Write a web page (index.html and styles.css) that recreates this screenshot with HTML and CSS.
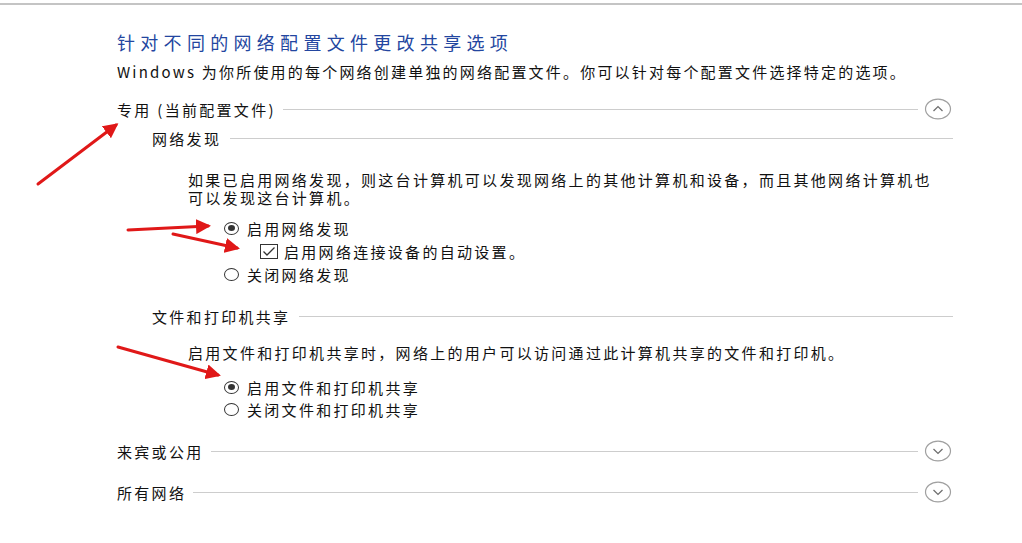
FILE: index.html
```html
<!DOCTYPE html>
<html lang="zh-CN">
<head>
    <meta charset="UTF-8">
    <title>高级共享设置</title>
    <link rel="stylesheet" href="styles.css">
</head>
<body>
    <div class="top-rule"></div>

    <main class="page">
        <h1 class="title">针对不同的网络配置文件更改共享选项</h1>
        <p class="intro">Windows 为你所使用的每个网络创建单独的网络配置文件。你可以针对每个配置文件选择特定的选项。</p>

        <section class="profile">
            <div class="profile-head">
                <span class="label">专用 (当前配置文件)</span>
                <span class="rule"></span>
                <svg class="toggle" width="28" height="22" viewBox="0 0 28 22">
                    <ellipse cx="14" cy="11" rx="12.5" ry="9.8" fill="none" stroke="#a0a0a0" stroke-width="1.2"/>
                    <path d="M9.5 13 L14 8.6 L18.5 13" fill="none" stroke="#6f6f6f" stroke-width="1.3"/>
                </svg>
            </div>

            <div class="group">
                <div class="group-head">
                    <span class="label">网络发现</span>
                    <span class="rule"></span>
                </div>
                <p class="desc">如果已启用网络发现，则这台计算机可以发现网络上的其他计算机和设备，而且其他网络计算机也可以发现这台计算机。</p>
                <div class="options">
                    <label class="option"><span class="radio checked"></span>启用网络发现</label>
                    <label class="option sub">
                        <svg class="check" width="18" height="15" viewBox="0 0 18 15">
                            <rect x="0.5" y="0.5" width="17" height="14" fill="#fff" stroke="#333" stroke-width="1"/>
                            <path d="M3.5 7.5 L7 11 L14.5 3.5" fill="none" stroke="#333" stroke-width="1.3"/>
                        </svg>启用网络连接设备的自动设置。</label>
                    <label class="option"><span class="radio"></span>关闭网络发现</label>
                </div>
            </div>

            <div class="group">
                <div class="group-head">
                    <span class="label">文件和打印机共享</span>
                    <span class="rule"></span>
                </div>
                <p class="desc">启用文件和打印机共享时，网络上的用户可以访问通过此计算机共享的文件和打印机。</p>
                <div class="options">
                    <label class="option"><span class="radio checked"></span>启用文件和打印机共享</label>
                    <label class="option"><span class="radio"></span>关闭文件和打印机共享</label>
                </div>
            </div>
        </section>

        <section class="profile closed">
            <div class="profile-head">
                <span class="label">来宾或公用</span>
                <span class="rule"></span>
                <svg class="toggle" width="28" height="22" viewBox="0 0 28 22">
                    <ellipse cx="14" cy="11" rx="12.5" ry="9.8" fill="none" stroke="#a0a0a0" stroke-width="1.2"/>
                    <path d="M9.5 9 L14 13.4 L18.5 9" fill="none" stroke="#6f6f6f" stroke-width="1.3"/>
                </svg>
            </div>
        </section>

        <section class="profile closed last">
            <div class="profile-head">
                <span class="label">所有网络</span>
                <span class="rule"></span>
                <svg class="toggle" width="28" height="22" viewBox="0 0 28 22">
                    <ellipse cx="14" cy="11" rx="12.5" ry="9.8" fill="none" stroke="#a0a0a0" stroke-width="1.2"/>
                    <path d="M9.5 9 L14 13.4 L18.5 9" fill="none" stroke="#6f6f6f" stroke-width="1.3"/>
                </svg>
            </div>
        </section>
    </main>

    <!-- red arrows drawn on top of the screenshot -->
    <svg class="marks" width="1022" height="543" viewBox="0 0 1022 543">
        <defs>
            <marker id="head" markerWidth="5" markerHeight="5" refX="4" refY="2.5" orient="auto" markerUnits="strokeWidth">
                <path d="M0 0 L5 2.5 L0 5 Z" fill="#e01818"/>
            </marker>
        </defs>
        <g stroke="#e01818" stroke-width="3" stroke-linecap="round" marker-end="url(#head)">
            <line x1="38" y1="184" x2="116" y2="125"/>
            <line x1="128" y1="230" x2="208" y2="226"/>
            <line x1="173" y1="234" x2="237" y2="248"/>
            <line x1="118" y1="347" x2="218" y2="375"/>
        </g>
    </svg>
</body>
</html>
```

FILE: styles.css
```css
* {
    margin: 0;
    padding: 0;
    box-sizing: border-box;
}

body {
    background: #fff;
    color: #111;
    font-family: "Noto Sans CJK SC", "Liberation Sans", sans-serif;
    font-size: 15px;
    letter-spacing: 2.3px;
    width: 1022px;
    height: 543px;
    overflow: hidden;
    position: relative;
}

.top-rule {
    margin-top: 3px;
    border-top: 2px solid #c4c4c4;
}

.page {
    padding: 0 69px 0 117px;
}

.title {
    margin-top: 25px;
    font-size: 18px;
    font-weight: normal;
    letter-spacing: 5.3px;
    line-height: 24px;
    color: #2346a0;
}

.intro {
    margin-top: 8px;
    line-height: 20px;
    letter-spacing: 2.2px;
}

/* profile header: label, rule, round toggle */
.profile-head {
    display: flex;
    align-items: center;
    height: 26px;
    margin-top: 14px;
}

.closed .profile-head {
    margin-top: 18px;
}

.last .profile-head {
    margin-top: 15px;
}

.rule {
    flex: 1;
    height: 1px;
    background: #cdcdcd;
    margin-left: 7px;
}

.toggle {
    margin-left: 6px;
    margin-right: 1px;
    flex: none;
}

.group {
    margin-left: 35px;
}

.group-head {
    display: flex;
    align-items: center;
    height: 20px;
    margin-top: 6px;
}

.group + .group .group-head {
    margin-top: 21px;
}

.group-head .rule {
    margin-left: 9px;
}

.desc {
    margin: 23px 0 0 36px;
    max-width: 750px;
    line-height: 18px;
}

.group + .group .desc {
    margin-top: 18px;
}

.options {
    margin: 10px 0 0 72px;
}

.group + .group .options {
    margin-top: 14px;
}

.option {
    display: flex;
    align-items: center;
    height: 22px;
}

.option.sub {
    height: 24px;
    margin-left: 36px;
}

.radio {
    width: 15px;
    height: 13px;
    border: 1px solid #333;
    border-radius: 50%;
    margin-right: 8px;
    display: flex;
    align-items: center;
    justify-content: center;
    flex: none;
}

.radio.checked::after {
    content: "";
    width: 7px;
    height: 6px;
    border-radius: 50%;
    background: #333;
}

.check {
    margin-right: 6px;
    flex: none;
}

.marks {
    position: absolute;
    top: 0;
    left: 0;
    pointer-events: none;
}
```
